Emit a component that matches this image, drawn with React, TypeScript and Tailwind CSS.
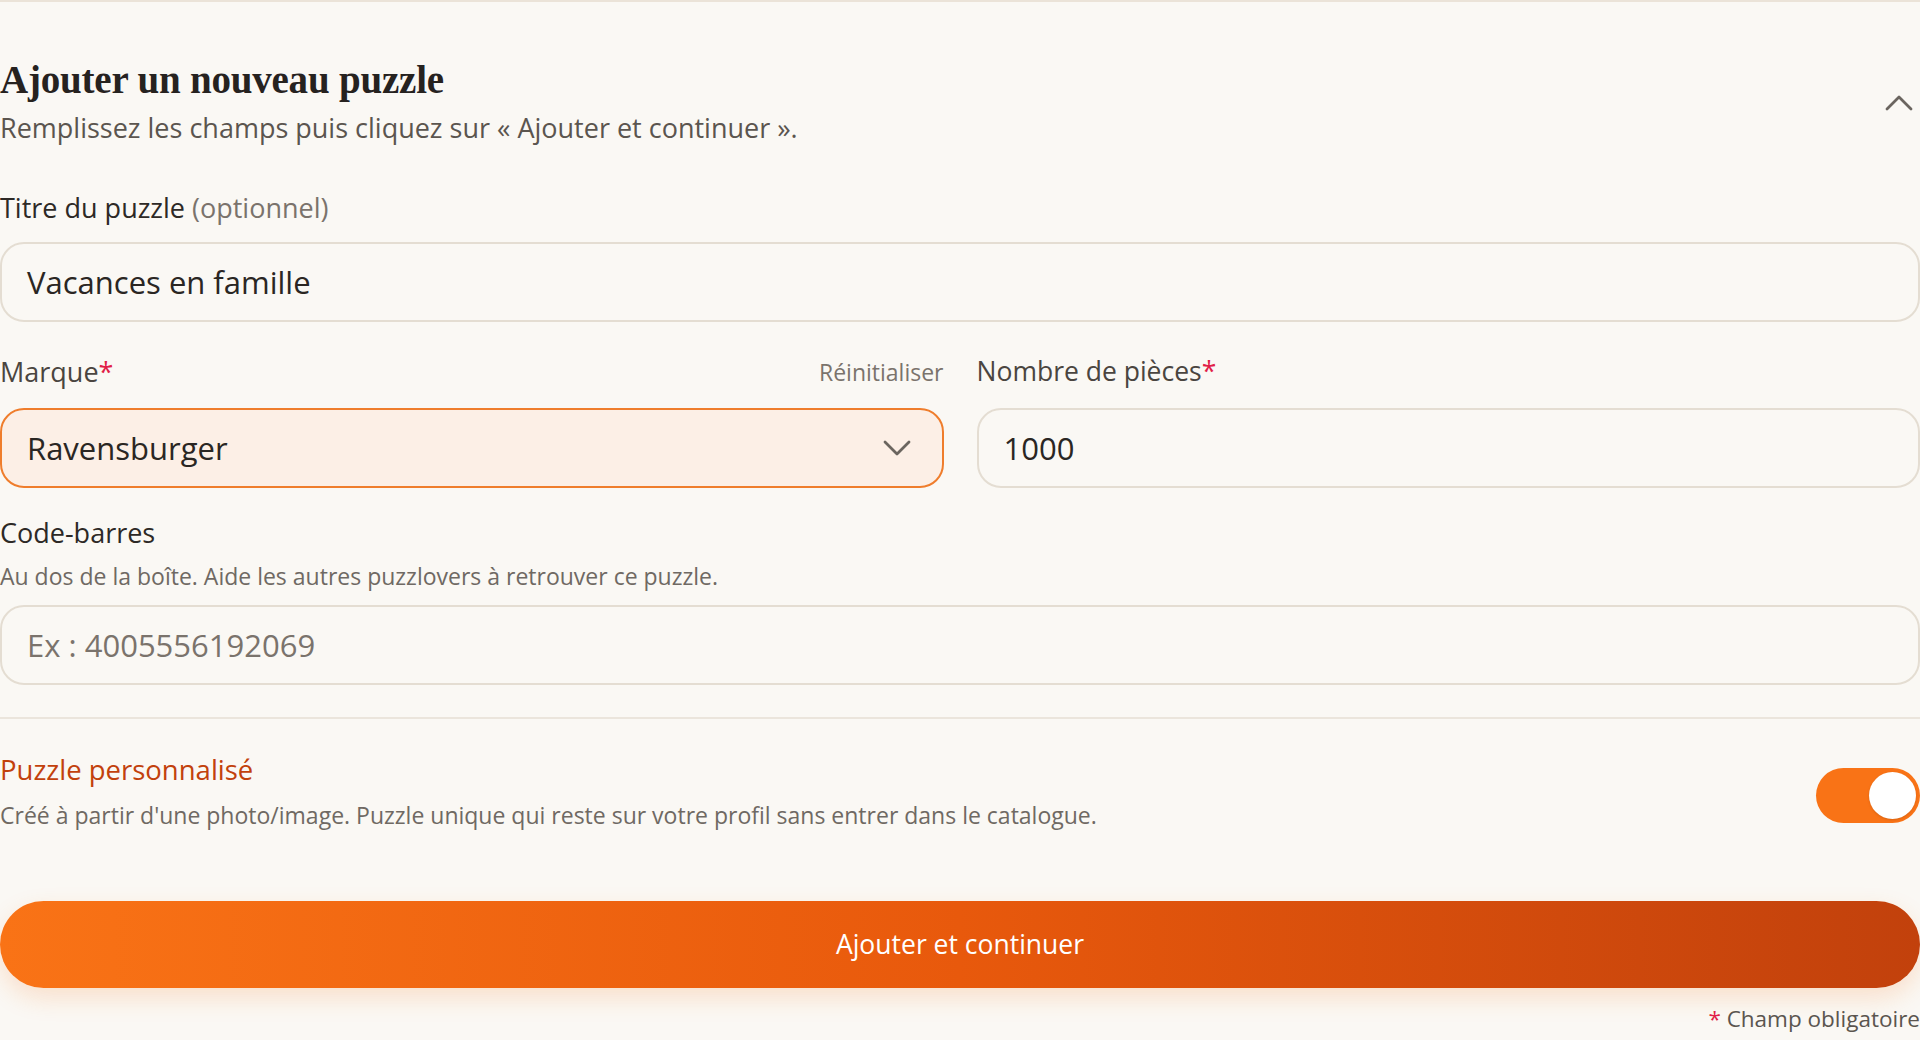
import React, { useState } from 'react';

const sans = { fontFamily: '"Open Sans", "Noto Sans", sans-serif' };

const Chevron = ({ up, className }: { up?: boolean; className?: string }) => (
  <svg width="28" height="16" viewBox="0 0 28 16" fill="none" className={className}>
    <polyline
      points={up ? '2,14 14,2 26,14' : '2,2 14,14 26,2'}
      stroke="currentColor"
      strokeWidth="2.8"
      strokeLinecap="round"
      strokeLinejoin="round"
    />
  </svg>
);

export default function App() {
  const [custom, setCustom] = useState(true);

  return (
    <div className="min-h-[1040px] w-full bg-[#faf8f4] text-[#2d2926]" style={sans}>
      <div className="border-t-2 border-[#ebe3d8]" />
      <div className="flex flex-col">
        {/* Header */}
        <div className="flex items-center justify-between pt-[54px]">
          <div className="flex flex-col">
            <h2 className="text-[39px] leading-[48px] font-bold tracking-[-0.2px] text-[#26221f]" style={{ fontFamily: '"Liberation Serif", serif' }}>
              Ajouter un nouveau puzzle
            </h2>
            <p className="text-[27px] leading-[34px] text-[#5b554f] mt-[7px]">
              Remplissez les champs puis cliquez sur « Ajouter et continuer ».
            </p>
          </div>
          <Chevron up className="mt-[4px] mr-[7px] text-[#6b655f]" />
        </div>

        {/* Titre */}
        <label className="mt-[46px] text-[27px] leading-[34px] text-[#2d2926]">
          Titre du puzzle <span className="text-[#7a736c]">(optionnel)</span>
        </label>
        <div className="mt-[17px] h-[80px] rounded-[24px] border-2 border-[#e4ddd2] flex items-center px-[25px] text-[31px] text-[#2a2623]">
          Vacances en famille
        </div>

        {/* Marque + Nombre */}
        <div className="mt-[33px] grid grid-cols-2 gap-[33px]">
          <div className="flex flex-col">
            <div className="flex items-center justify-between h-[34px]">
              <span className="text-[27px] text-[#4a4540]">Marque<span className="text-[#e11d48]">*</span></span>
              <span className="text-[23px] text-[#7a736c]">Réinitialiser</span>
            </div>
            <div className="mt-[19px] h-[80px] rounded-[24px] border-2 border-[#ef7d2c] bg-[#fcefe6] flex items-center justify-between pl-[25px] pr-[31px] text-[31px] text-[#2a2623]">
              <span>Ravensburger</span>
              <Chevron className="text-[#6b655f]" />
            </div>
          </div>
          <div className="flex flex-col">
            <div className="flex items-center h-[34px]">
              <span className="text-[26.5px] text-[#4a4540]">Nombre de pièces<span className="text-[#e11d48]">*</span></span>
            </div>
            <div className="mt-[19px] h-[80px] rounded-[24px] border-2 border-[#e4ddd2] flex items-center px-[25px] text-[31px] text-[#2a2623]">
              1000
            </div>
          </div>
        </div>

        {/* Code-barres */}
        <label className="mt-[28px] text-[27px] leading-[34px] text-[#2d2926]">Code-barres</label>
        <p className="mt-[11px] text-[23px] leading-[30px] text-[#6f6963]">
          Au dos de la boîte. Aide les autres puzzlovers à retrouver ce puzzle.
        </p>
        <div className="mt-[14px] h-[80px] rounded-[24px] border-2 border-[#e4ddd2] flex items-center px-[25px] text-[31px] text-[#7a736c]">
          Ex : 4005556192069
        </div>

        <div className="mt-[32px] border-t-2 border-[#ebe5dc]" />

        {/* Puzzle personnalisé */}
        <div className="mt-[34px] flex items-center justify-between">
          <div className="flex flex-col">
            <span className="text-[27.5px] leading-[34px] font-medium text-[#c2410c]">Puzzle personnalisé</span>
            <span className="mt-[13px] text-[23px] leading-[30px] text-[#6f6963]">
              Créé à partir d'une photo/image. Puzzle unique qui reste sur votre profil sans entrer dans le catalogue.
            </span>
          </div>
          <button
            onClick={() => setCustom(!custom)}
            className={`relative mt-[8px] w-[104px] h-[55px] rounded-full transition-colors ${custom ? 'bg-[#f97316]' : 'bg-[#d6cfc5]'}`}
          >
            <span className={`absolute top-[4px] w-[47px] h-[47px] rounded-full bg-white shadow-sm ${custom ? 'right-[4px]' : 'left-[4px]'}`} />
          </button>
        </div>

        {/* Submit */}
        <button className="mt-[71px] h-[87px] w-full rounded-full bg-gradient-to-r from-[#f97316] via-[#e8590c] to-[#c2410c] text-white text-[26.5px] shadow-[0_10px_24px_rgba(249,115,22,0.18)]">
          Ajouter et continuer
        </button>

        <p className="mt-[16px] text-right text-[22.5px] leading-[30px] text-[#5b554f]">
          <span className="text-[#e11d48]">*</span> Champ obligatoire
        </p>
      </div>
    </div>
  );
}
